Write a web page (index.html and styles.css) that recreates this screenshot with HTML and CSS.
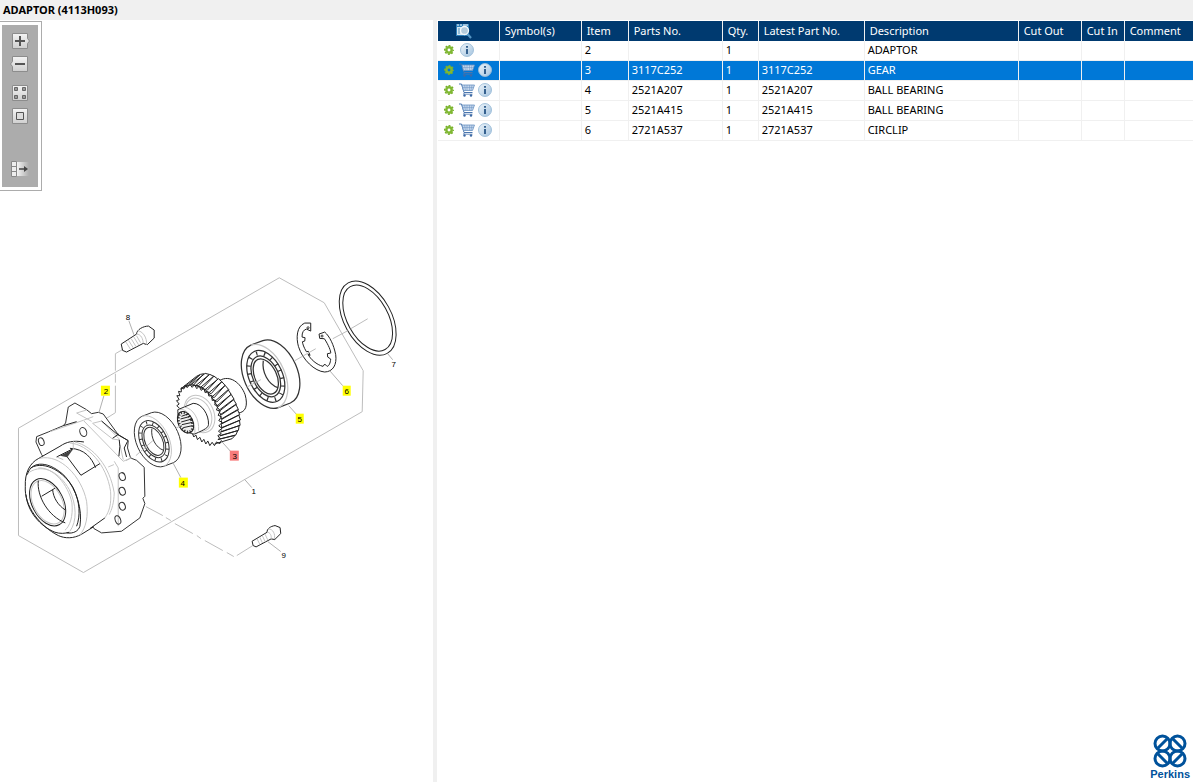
FILE: index.html
```html
<!DOCTYPE html>
<html lang="en">

<head>
    <meta charset="UTF-8">
    <meta name="viewport" content="width=device-width, initial-scale=1.0">
    <title>ADAPTOR (4113H093)</title>
    <link rel="stylesheet" href="styles.css">
</head>

<body>
    <!-- Shared icons -->
    <svg class="sprite" aria-hidden="true">
        <defs>
            <linearGradient id="info-fill" x1="0" y1="0" x2="1" y2="1">
                <stop offset="0" stop-color="#eef5fa" />
                <stop offset="1" stop-color="#a3c3df" />
            </linearGradient>
            <linearGradient id="button-fill" x1="0" y1="0" x2="0" y2="1">
                <stop offset="0" stop-color="#f4f4f4" />
                <stop offset="1" stop-color="#cfcfcf" />
            </linearGradient>
            <linearGradient id="export-fill" x1="0" y1="0" x2="1" y2="0">
                <stop offset="0" stop-color="#f4f4f4" />
                <stop offset="1" stop-color="#acacac" />
            </linearGradient>
        </defs>
        <symbol id="icon-gear" viewBox="0 0 10 10">
            <circle cx="5" cy="5" r="4.300" fill="none" stroke="#76ae2a" stroke-width="1.400" stroke-dasharray="1.900 1.477" stroke-dashoffset=".95" />
            <circle cx="5" cy="5" r="2.700" fill="none" stroke="#80b832" stroke-width="2.500" />
        </symbol>
        <symbol id="icon-cart" viewBox="0 0 16 14">
            <path d="M0 1h2.500l2.500 8.500h8.500" fill="none" stroke="#4a76ae" />
            <path d="M3 2h12.500l-2 5.500h-9z" fill="#c3d6ec" stroke="#6a92c2" stroke-width=".8" />
            <path d="M5.500 2l1 5.500M8 2v5.500M10.500 2v5.500M13 2l-1 5.500M3.500 4.500h11" stroke="#6a92c2" stroke-width=".5" />
            <path d="M5.500 9.500l-1 1.700h9" fill="none" stroke="#4a76ae" stroke-width=".8" />
            <circle cx="5.500" cy="12.500" r="1.200" fill="#3d6aa5" />
            <circle cx="12" cy="12.500" r="1.200" fill="#3d6aa5" />
        </symbol>
        <symbol id="icon-info" viewBox="0 0 14 14">
            <circle cx="7" cy="7" r="6.500" fill="url(#info-fill)" stroke="#9bbcd8" stroke-width=".9" />
            <path d="M6 3h2v1.800H6zM6 6h2v5H6z" fill="#35618f" />
        </symbol>
        <!-- bearing, used at two sizes -->
        <symbol id="bearing" viewBox="0 0 200 340" overflow="visible">
            <path class="solid" d="M66 170L95 159A50 82 -25 0 1 161 309L132 320A50 82 -25 0 1 66 170Z" />
            <path class="soft" d="M66 170A50 82 -25 0 1 132 320" />
            <g transform="translate(102 245) rotate(-25)">
                <ellipse class="line" rx="40" ry="66" />
                <ellipse class="rollers" rx="36" ry="59" />
                <ellipse class="solid" rx="31" ry="52" />
                <ellipse class="line" rx="26" ry="45" />
            </g>
            <path class="line" d="M96 207C92 235 108 264 131 272" />
        </symbol>
    </svg>

    <h1 class="titlebar">ADAPTOR (4113H093)</h1>

    <main class="workspace">
        <section class="drawing-pane" aria-label="Drawing">
            <div class="toolbar">
                <div class="toolbar-group">
                    <button type="button" aria-label="Zoom in">
                        <svg viewBox="0 0 20 16"><path d="M2.500 .5h15v5l2 2.500-2 2.500v5h-15z" fill="url(#button-fill)" stroke="#8c8c8c" /><path d="M10 3v10M5 8h10" stroke="#555" stroke-width="2" /></svg>
                    </button>
                    <button type="button" aria-label="Zoom out">
                        <svg viewBox="0 0 20 16"><path d="M2.500 .5h15v15h-15v-5L.5 8l2-2.500z" fill="url(#button-fill)" stroke="#8c8c8c" /><path d="M5 8h10" stroke="#555" stroke-width="2" /></svg>
                    </button>
                </div>
                <div class="toolbar-group">
                    <button type="button" aria-label="Fit to window">
                        <svg viewBox="0 0 20 16"><path d="M2.500 .5h15v15h-15z" fill="url(#button-fill)" stroke="#8c8c8c" /><path d="M4.500 2.500h3v3h-3zM12.500 2.500h3v3h-3zM4.500 10.500h3v3h-3zM12.500 10.500h3v3h-3z" fill="#999" stroke="#666" /></svg>
                    </button>
                    <button type="button" aria-label="Actual size">
                        <svg viewBox="0 0 20 16"><path d="M2.500 .5h15v15h-15z" fill="url(#button-fill)" stroke="#8c8c8c" /><path d="M6.500 4.500h7v7h-7z" fill="#ddd" stroke="#555" /></svg>
                    </button>
                </div>
                <div class="toolbar-group">
                    <button type="button" aria-label="Hide list">
                        <svg viewBox="0 0 20 16"><path d="M7 1h12v14H7z" fill="url(#export-fill)" /><path d="M1.500 .5h5v15h-5zM1.500 5.500h5M1.500 10.500h5" fill="#eee" stroke="#888" /><path d="M9 8h7" stroke="#444" stroke-width="1.500" /><path d="M14 5L18 8 14 11z" fill="#444" /></svg>
                    </button>
                </div>
            </div>

            <svg class="drawing" viewBox="0 20 433 762" preserveAspectRatio="xMinYMin meet" role="img" aria-label="Exploded view of the adaptor">
                <!-- assembly frame and centre lines -->
                <path class="guide" d="M18.500 428.500L279.500 278L324.500 303L363.500 371L362.500 412L83.500 573L18.500 536Z" />
                <path class="guide" d="M124 349L115.500 354V371M115.500 374V383M115.500 386V413L106 419" />
                <path class="guide" d="M146 507L163 516M166 518L171 521M175 524L193 534M197 536L201 539M205 541L223 551M227 553L234 557M237 556L253 546" />

                <!-- housing -->
                <g transform="translate(10 380) scale(.3333)">
                    <path class="solid" d="M95 225L78 187L80 171L115 157L160 138L167 130L175 82L195 70L230 90L245 102L265 98L280 103L325 165L355 183L353 205L362 235L380 242L403 263L405 350L399 356L405 372L390 415L335 455L275 460L252 447Z" />
                    <path class="soft" d="M120 156L220 122L250 111M222 124L340 245L363 235M275 124L328 178M200 100L230 91M200 100L245 125M248 131L275 124M248 131L308 178L328 181M330 195L340 240M313 245L325 265L325 440M295 262L312 255" />
                    <path class="line strong" d="M275 124L322 164L355 183M308 176L327 163M328 180L330 200L327 230M353 185L343 205L350 232" />
                    <path class="line strong" d="M160 138L200 126" />
                    <ellipse class="line" cx="337" cy="291" rx="9" ry="12" transform="rotate(-20 337 291)" />
                    <ellipse class="line" cx="337" cy="335" rx="9" ry="12" transform="rotate(-20 337 335)" />
                    <ellipse class="line" cx="337" cy="380" rx="9" ry="12" transform="rotate(-20 337 380)" />
                    <ellipse class="line" cx="324" cy="421" rx="8" ry="13" transform="rotate(-20 324 421)" />
                    <ellipse class="line" cx="220" cy="157" rx="10" ry="14" transform="rotate(-20 220 157)" />
                    <ellipse class="line" cx="94" cy="186" rx="8" ry="12" transform="rotate(-20 94 186)" />
                    <path class="fill" d="M50 280C55 255 70 244 90 235L165 192C200 178 240 195 265 230C300 280 315 340 303 385C297 410 275 425 215 464C190 478 160 476 145 468C90 440 40 375 46 320Z" />
                    <path class="line strong" d="M46 320C44 280 60 250 85 237L150 200C170 186 190 182 222 187M252 441L215 464C190 478 165 477 145 468C90 440 42 380 46 320" />
                    <path class="line strong" d="M285 415L240 447" />
                    <path class="soft" d="M180 190C235 195 290 255 302 335C305 375 298 395 285 415M195 187C250 200 300 260 313 340C312 370 306 390 298 405M90 236C150 222 215 290 230 365C236 410 228 445 210 466" />
                    <path class="line strong" d="M52 285C65 240 120 245 165 290C200 330 218 390 210 440C205 455 190 463 170 460M62 265C105 240 165 280 190 325C210 365 212 410 200 440" />
                    <path class="line strong" d="M48 345C52 395 90 440 135 458C150 463 165 462 178 458" />
                    <path class="soft" d="M58 278C100 250 150 280 178 330C200 375 202 425 180 455M85 265C130 262 175 315 186 370C190 410 180 440 165 452" />
                    <g transform="translate(113 368) rotate(-27)">
                        <ellipse class="line strong" rx="47" ry="76" />
                        <ellipse class="soft" rx="43" ry="70" />
                    </g>
                    <path class="line strong" d="M85 303C80 350 115 410 166 430M95 350L135 326M128 330C130 355 145 378 166 391" />
                    <path class="line strong" d="M140 232L192 206M172 232L213 287L270 252M180 206C225 208 245 235 257 264" />
                    <path class="shade" d="M150 228L190 208L172 233Z" />
                    <path class="soft" d="M140 232L160 240M190 208V185" />
                </g>

                <!-- bearings -->
                <use href="#bearing" width="200" height="340" transform="translate(223.500 274.600) scale(.4167)" />
                <use href="#bearing" width="200" height="340" transform="translate(120 360) scale(.3333)" />

                <!-- gear -->
                <g transform="translate(120 360) scale(.3333)">
                    <path class="solid strong" d="M300 62C330 45 362 68 376 105C385 138 378 158 355 160L300 150Z" />
                    <path class="fill" d="M250 42L290 52L330 85L352 130L362 180L345 235L282 257L225 230L172 140L185 85Z" />
                    <path class="solid strong" d="M182 88L230 50L240 45L208 77ZM197 80L242 44L252 42L222 75ZM212 76L256 41L268 44L237 78ZM227 78L270 44L282 50L250 84ZM241 84L282 49L294 58L262 92ZM253 92L296 57L306 66L274 102ZM264 102L306 66L316 77L283 114ZM274 114L316 77L327 90L291 127ZM283 127L325 90L334 104L296 140ZM290 140L334 104L343 119L301 153ZM296 153L341 119L350 134L304 166ZM300 166L348 134L356 150L306 179ZM303 179L353 150L360 165L307 192ZM304 192L357 166L362 181L306 205ZM303 205L359 182L361 197L304 217ZM300 217L358 198L356 212L300 229ZM296 229L354 213L348 226L294 240ZM291 240L346 227L337 237L284 253Z" />
                    <path class="fill" d="M182 90L212 77L241 86L264 104L283 128L296 155L303 180L304 206L299 230L287 253L255 246L220 222L176 155L172 120Z" />
                    <path class="line strong" d="M210 74L202 84L196 76L192 88L185 84L184 97L176 95L180 108L171 108L178 120L170 123L178 133L171 138L179 146M218 222L222 232L228 226L233 240L240 233L246 247L252 239L258 253L264 244L270 258L277 248L284 258L290 247L300 252L305 242" />
                    <path class="line strong" d="M210 74L217 83L224 75L231 87L238 79L244 92L252 86L256 99L265 96L267 109L277 108L277 122L287 122L285 136L295 138L290 151L301 154L295 167L305 171L297 183L307 188L297 199L307 206L296 214L304 222L294 228L302 238" />
                    <ellipse class="soft" cx="239" cy="163" rx="43" ry="59" transform="rotate(-25 239 163)" />
                    <ellipse class="soft" cx="236" cy="165" rx="37" ry="52" transform="rotate(-25 236 165)" />
                    <path class="solid strong" d="M174 150L220 131C245 130 268 165 266 195C264 205 258 208 225 223C200 225 172 185 174 150Z" />
                    <path class="soft" d="M192 142C220 145 240 180 236 213M180 150C205 145 228 185 225 220" />
                    <g transform="translate(197 188) rotate(-25)">
                        <ellipse class="splines" rx="19" ry="31" />
                        <ellipse class="line strong" rx="22" ry="34" />
                    </g>
                    <path class="line strong" d="M185 170L207 162M182 178L212 170M184 187L216 178M186 195L218 188M190 204L218 198" />
                </g>

                <!-- circlip and ring -->
                <g transform="translate(230 270) scale(.3333)">
                    <path class="solid strong" d="M243 160L225 160C200 170 199 205 206 230C218 270 255 305 285 307C310 306 322 285 318 255C312 225 300 200 285 187L268 193L270 206L284 207C296 225 304 245 303 250L293 252L294 262L303 268C302 280 298 289 292 290L285 283L280 290C260 285 242 268 235 254L241 257L236 245L230 246C222 232 219 224 218 216L225 214L226 204L217 202C216 188 222 180 230 178L243 184Z" />
                    <circle class="line" cx="235" cy="174" r="3" />
                    <circle class="line" cx="277" cy="199" r="3" />
                    <ellipse class="line strong" cx="414" cy="145" rx="71" ry="121" transform="rotate(-29 414 145)" />
                    <ellipse class="line strong" cx="414" cy="145" rx="61" ry="108" transform="rotate(-29 414 145)" />
                </g>

                <!-- bolts -->
                <g transform="translate(100 305) scale(.3333)">
                    <path class="solid strong" d="M110 88L64 118L68 137L80 142L130 116L142 120L163 100V76L146 64C130 64 110 75 110 88Z" />
                    <path class="soft" d="M112 78C128 78 142 98 140 120M110 88C124 88 130 104 130 116M78 112L92 134M86 107L100 129M94 102L108 125M102 97L116 120M110 93L122 114" />
                </g>
                <g transform="translate(130 470) scale(.3333)">
                    <path class="solid strong" d="M412 188L367 215L370 228L379 232L424 208L435 210L453 192L451 174L436 168C422 170 411 178 412 188Z" />
                    <path class="soft" d="M416 178C430 178 437 194 434 208M412 188C422 188 426 200 424 208M382 208L390 224M390 203L398 220M398 199L406 216M406 194L414 211" />
                </g>

                <!-- axis through the parts -->
                <path class="guide" d="M126 461L132 458M136 456L153 441M175 429L181 426M246 388L261 380M295 361L316 349M333 339L348 331M351 329L368 319" />

                <!-- leaders -->
                <path class="leader" d="M129 321L134 335M388 354L393 360M330 371L343 386M289 406L297 415M222 442L231 452M173 463L181 478M245 480L252 488M268 542L281 552M104 396L99 413" />

                <!-- callouts -->
                <g class="callout">
                    <rect x="101" y="386" width="9" height="10" />
                    <rect x="343" y="386" width="8" height="10" />
                    <rect x="296" y="414" width="8" height="10" />
                    <rect x="179" y="478" width="9" height="10" />
                    <rect class="active" x="230" y="451" width="9" height="10" />
                    <text x="254" y="494">1</text>
                    <text x="106" y="394">2</text>
                    <text x="235" y="459">3</text>
                    <text x="183" y="486">4</text>
                    <text x="300" y="422">5</text>
                    <text x="347" y="394">6</text>
                    <text x="394" y="367">7</text>
                    <text x="128" y="320">8</text>
                    <text x="284" y="558">9</text>
                </g>
            </svg>
        </section>

        <div class="splitter"></div>

        <section class="list-pane" aria-label="Parts list">
            <table class="parts">
                <colgroup>
                    <col class="col-actions">
                    <col class="col-symbols">
                    <col class="col-item">
                    <col class="col-part">
                    <col class="col-qty">
                    <col class="col-latest">
                    <col class="col-description">
                    <col class="col-cutout">
                    <col class="col-cutin">
                    <col>
                </colgroup>
                <thead>
                    <tr>
                        <th class="search-cell">
                            <button type="button" aria-label="Search list">
                                <svg viewBox="0 0 16 16"><path d="M0 1h13v12H0z" fill="#2f7fb8" /><path d="M1 4h11v8H1z" fill="#d8e8f2" /><path d="M1 2h2M4 2h2M7 2h5M2 6h2M2 8h2M2 10h2" stroke="#fff" /><path d="M2 6h2M2 8h2M2 10h2" stroke="#3b86b8" /><circle cx="8.500" cy="7.500" r="4" fill="#b4cbdc" stroke="#f4f8fb" stroke-width="1.300" /><path d="M11.500 11l3.500 4" stroke="#5596c4" stroke-width="2.200" /></svg>
                            </button>
                        </th>
                        <th>Symbol(s)</th>
                        <th>Item</th>
                        <th>Parts No.</th>
                        <th>Qty.</th>
                        <th>Latest Part No.</th>
                        <th>Description</th>
                        <th>Cut Out</th>
                        <th>Cut In</th>
                        <th>Comment</th>
                    </tr>
                </thead>
                <tbody>
                    <tr>
                        <td>
                            <div class="actions">
                                <svg class="gear"><use href="#icon-gear" /></svg>
                                <button type="button" aria-label="Information"><svg class="info"><use href="#icon-info" /></svg></button>
                            </div>
                        </td>
                        <td></td>
                        <td>2</td>
                        <td></td>
                        <td>1</td>
                        <td></td>
                        <td>ADAPTOR</td>
                        <td></td>
                        <td></td>
                        <td></td>
                    </tr>
                    <tr class="selected">
                        <td>
                            <div class="actions">
                                <svg class="gear"><use href="#icon-gear" /></svg>
                                <button type="button" aria-label="Add to cart"><svg class="cart"><use href="#icon-cart" /></svg></button>
                                <button type="button" aria-label="Information"><svg class="info"><use href="#icon-info" /></svg></button>
                            </div>
                        </td>
                        <td></td>
                        <td>3</td>
                        <td>3117C252</td>
                        <td>1</td>
                        <td>3117C252</td>
                        <td>GEAR</td>
                        <td></td>
                        <td></td>
                        <td></td>
                    </tr>
                    <tr>
                        <td>
                            <div class="actions">
                                <svg class="gear"><use href="#icon-gear" /></svg>
                                <button type="button" aria-label="Add to cart"><svg class="cart"><use href="#icon-cart" /></svg></button>
                                <button type="button" aria-label="Information"><svg class="info"><use href="#icon-info" /></svg></button>
                            </div>
                        </td>
                        <td></td>
                        <td>4</td>
                        <td>2521A207</td>
                        <td>1</td>
                        <td>2521A207</td>
                        <td>BALL BEARING</td>
                        <td></td>
                        <td></td>
                        <td></td>
                    </tr>
                    <tr>
                        <td>
                            <div class="actions">
                                <svg class="gear"><use href="#icon-gear" /></svg>
                                <button type="button" aria-label="Add to cart"><svg class="cart"><use href="#icon-cart" /></svg></button>
                                <button type="button" aria-label="Information"><svg class="info"><use href="#icon-info" /></svg></button>
                            </div>
                        </td>
                        <td></td>
                        <td>5</td>
                        <td>2521A415</td>
                        <td>1</td>
                        <td>2521A415</td>
                        <td>BALL BEARING</td>
                        <td></td>
                        <td></td>
                        <td></td>
                    </tr>
                    <tr>
                        <td>
                            <div class="actions">
                                <svg class="gear"><use href="#icon-gear" /></svg>
                                <button type="button" aria-label="Add to cart"><svg class="cart"><use href="#icon-cart" /></svg></button>
                                <button type="button" aria-label="Information"><svg class="info"><use href="#icon-info" /></svg></button>
                            </div>
                        </td>
                        <td></td>
                        <td>6</td>
                        <td>2721A537</td>
                        <td>1</td>
                        <td>2721A537</td>
                        <td>CIRCLIP</td>
                        <td></td>
                        <td></td>
                        <td></td>
                    </tr>
                </tbody>
            </table>

            <div class="brand">
                <svg viewBox="0 0 34 34">
                    <g fill="none" stroke="#00529b" stroke-width="3">
                        <circle cx="9.500" cy="9.500" r="7.500" />
                        <circle cx="24.500" cy="9.500" r="7.500" />
                        <circle cx="9.500" cy="24.500" r="7.500" />
                        <circle cx="24.500" cy="24.500" r="7.500" />
                        <path d="M5 14L14 5M20 5L29 14M5 20L14 29M20 29L29 20" />
                    </g>
                </svg>
                <span>Perkins</span>
            </div>
        </section>
    </main>
</body>

</html>
```

FILE: styles.css
```css
* {
    box-sizing: border-box;
}

body {
    display: flex;
    flex-direction: column;
    height: 100vh;
    margin: 0;
    overflow: hidden;
    background-color: #fff;
    color: #000;
    font-family: "Noto Sans", "Open Sans", sans-serif;
    font-size: 11px;
}

button {
    display: flex;
    align-items: center;
    justify-content: center;
    padding: 0;
    border: 0;
    background: none;
    cursor: pointer;
}

svg {
    display: block;
}

.sprite {
    position: absolute;
    width: 0;
    height: 0;
}

.titlebar {
    margin: 0;
    padding: 0 3px;
    background-color: #f0f0f0;
    font-size: 11px;
    line-height: 20px;
}

.workspace {
    display: flex;
    flex: 1;
    min-height: 0;
}

/* Drawing */
.drawing-pane {
    position: relative;
    flex: 433 1 0;
    min-width: 0;
}

.drawing {
    width: 100%;
    height: 100%;
}

.toolbar {
    position: absolute;
    top: 2px;
    left: 0;
    display: flex;
    flex-direction: column;
    padding: 8px 8px 10px;
    border: solid #fff;
    border-width: 3px 3px 3px 2px;
    outline: 1px solid #acacac;
    background-color: #acacac;
}

.toolbar-group {
    display: flex;
    flex-direction: column;
    gap: 7px;
}

.toolbar-group + .toolbar-group {
    margin-top: 13px;
}

.toolbar-group:last-child {
    margin-top: 37px;
}

.toolbar svg {
    width: 20px;
    height: 16px;
}

.guide,
.leader,
.line,
.soft {
    fill: none;
}

.guide {
    stroke: #bdbdbd;
}

.leader {
    stroke: #b0b0b0;
}

.line {
    stroke: #333;
    stroke-width: 3px;
}

.soft {
    stroke: #c4c4c4;
    stroke-width: 3px;
}

.fill {
    fill: #fff;
}

.solid {
    fill: #fff;
    stroke: #333;
    stroke-width: 3px;
}

.strong {
    stroke: #222;
}

.shade {
    fill: #444;
}

.rollers {
    fill: none;
    stroke: #333;
    stroke-width: 10px;
    stroke-dasharray: 3px 16px;
}

.splines {
    fill: #eee;
    stroke: #333;
    stroke-width: 8px;
    stroke-dasharray: 4px 5px;
}

.callout rect {
    fill: #ff0;
}

.callout .active {
    fill: #f87b7b;
}

.callout text {
    font-family: "Liberation Sans", sans-serif;
    font-size: 8px;
    text-anchor: middle;
}

.splitter {
    flex: none;
    width: 4px;
    background-color: #f0f0f0;
    cursor: col-resize;
}

/* Parts list */
.list-pane {
    display: flex;
    flex: 756 1 0;
    flex-direction: column;
    min-width: 0;
    padding: 1px 0 0 1px;
}

.parts {
    width: 100%;
    table-layout: fixed;
    border-collapse: separate;
    border-spacing: 0;
}

.col-actions {
    width: 62px;
}

.col-symbols {
    width: 82px;
}

.col-item {
    width: 47px;
}

.col-part {
    width: 94px;
}

.col-qty {
    width: 36px;
}

.col-latest {
    width: 106px;
}

.col-description {
    width: 154px;
}

.col-cutout {
    width: 63px;
}

.col-cutin {
    width: 43px;
}

.parts th,
.parts td {
    height: 20px;
    border-right: 1px solid #f0f0f0;
    text-align: left;
    vertical-align: top;
    white-space: nowrap;
}

.parts th {
    padding: 0 0 0 5px;
    background-color: #003a70;
    color: #fff;
    font-weight: normal;
    line-height: 19px;
}

.parts td {
    padding: 0 0 0 3px;
    border-bottom: 1px solid #f0f0f0;
    line-height: 17px;
}

.parts th:last-child,
.parts td:last-child {
    border-right: 0;
}

.parts .search-cell {
    padding: 2px 8px 0 0;
}

.search-cell button {
    width: 100%;
}

.search-cell svg {
    width: 16px;
    height: 16px;
}

.selected td {
    background-color: #0078d7;
    color: #fff;
}

.actions {
    display: flex;
    align-items: center;
    height: 18px;
    padding-left: 3px;
}

.actions button {
    width: 18px;
    height: 18px;
}

.gear {
    width: 10px;
    height: 10px;
    margin-right: 4px;
}

.cart {
    width: 16px;
    height: 14px;
}

.info {
    width: 14px;
    height: 14px;
}

.brand {
    align-self: flex-end;
    margin-top: auto;
    padding: 0 3px 1px 0;
    color: #00529b;
    font-family: "Liberation Sans Narrow", "Liberation Sans", sans-serif;
    font-size: 11px;
    font-weight: bold;
    line-height: 13px;
    text-align: center;
}

.brand svg {
    width: 34px;
    height: 34px;
    margin: 0 auto;
}
```
